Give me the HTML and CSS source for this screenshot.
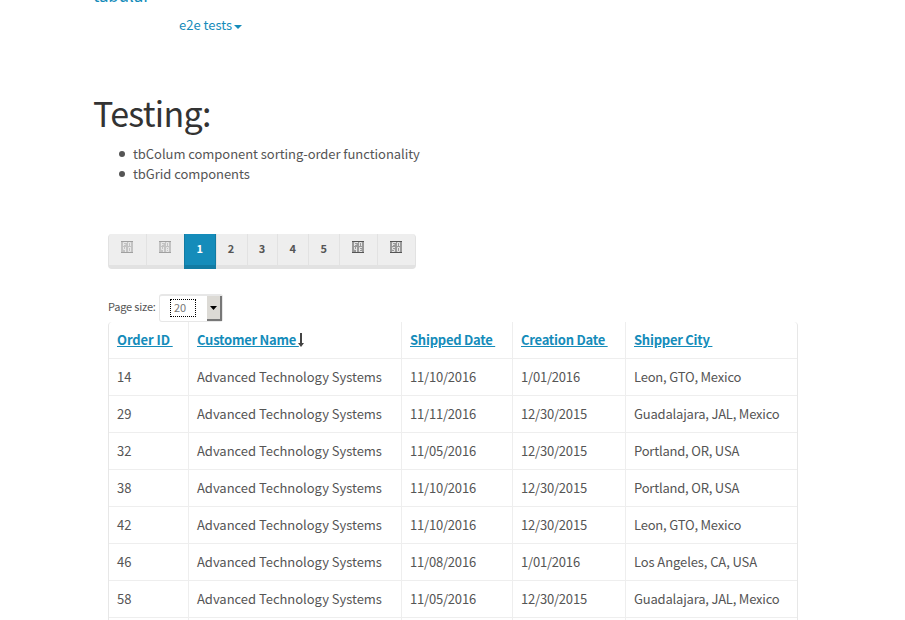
FILE: index.html
```
<!DOCTYPE html>
<html lang="en">
<head>
<meta charset="utf-8">
<title>tabular</title>
<link rel="stylesheet" href="styles.css">
</head>
<body>
<header class="navbar">
  <a class="brand">tabular</a>
  <nav class="menu"><a class="menu-link">e2e tests<svg class="caret" viewBox="0 0 8 4"><path d="M0 0h8L4 4z"/></svg></a></nav>
</header>
<main>
  <h1>Testing:</h1>
  <ul class="notes"><li>tbColum component sorting-order functionality</li><li>tbGrid components</li></ul>
  <ul class="pager">
    <li class="arrow off"><svg viewBox="0 0 12 12"><path class="tofu" d="M0 0h12v12H0z"/><path class="edge" d="M0 .5h12M0 11.500h12"/><path class="hex" d="M2.500 5V1.500H6M2.500 3.500h2M7.500 5V1.500h2V5M2.500 6v2.500H5M4.500 6v5M9 6.500H7.500v4h2V6"/></svg></li>
    <li class="arrow off"><svg viewBox="0 0 12 12"><path class="tofu" d="M0 0h12v12H0z"/><path class="edge" d="M0 .5h12M0 11.500h12"/><path class="hex" d="M2.500 5V1.500H6M2.500 3.500h2M7.500 5V1.500h2V5M2.500 6v2.500H5M4.500 6v5M7.500 6.500h2v4h-2zM7.500 8.500h2"/></svg></li>
    <li class="num active">1</li><li class="num">2</li><li class="num">3</li><li class="num">4</li><li class="num">5</li>
    <li class="arrow"><svg viewBox="0 0 12 12"><path class="tofu" d="M0 0h12v12H0z"/><path class="edge" d="M0 .5h12M0 11.500h12"/><path class="hex" d="M2.500 5V1.500H6M2.500 3.500h2M7.500 5V1.500h2V5M2.500 6v2.500H5M4.500 6v5M10 6.500H7.500v4H10M7.500 8.500h2"/></svg></li>
    <li class="arrow"><svg viewBox="0 0 12 12"><path class="tofu" d="M0 0h12v12H0z"/><path class="edge" d="M0 .5h12M0 11.500h12"/><path class="hex" d="M2.500 5V1.500H6M2.500 3.500h2M7.500 5V1.500h2V5M5 6.500H2.500v2h2v2H2M7.500 6.500h2v4h-2z"/></svg></li>
  </ul>
  <div class="page-size"><span class="size-label">Page size:</span><div class="select"><span class="value">20</span><span class="drop"><svg viewBox="0 0 7 4"><path d="M0 0h7L3.500 4z"/></svg></span></div></div>
  <table>
    <colgroup><col class="c1"><col class="c2"><col class="c3"><col class="c4"><col class="c5"></colgroup>
    <thead><tr><th><a>Order ID&nbsp;</a></th><th><a>Customer Name&nbsp;</a><svg class="sort" viewBox="0 0 6 14"><path d="M2 0h2v10h2L3 14 0 10h2z"/></svg></th><th><a>Shipped Date&nbsp;</a></th><th><a>Creation Date&nbsp;</a></th><th><a>Shipper City&nbsp;</a></th></tr></thead>
    <tbody>
      <tr><td>14</td><td class="name">Advanced Technology Systems</td><td>11/10/2016</td><td>1/01/2016</td><td>Leon, GTO, Mexico</td></tr>
      <tr><td>29</td><td class="name">Advanced Technology Systems</td><td>11/11/2016</td><td>12/30/2015</td><td>Guadalajara, JAL, Mexico</td></tr>
      <tr><td>32</td><td class="name">Advanced Technology Systems</td><td>11/05/2016</td><td>12/30/2015</td><td>Portland, OR, USA</td></tr>
      <tr><td>38</td><td class="name">Advanced Technology Systems</td><td>11/10/2016</td><td>12/30/2015</td><td>Portland, OR, USA</td></tr>
      <tr><td>42</td><td class="name">Advanced Technology Systems</td><td>11/10/2016</td><td>12/30/2015</td><td>Leon, GTO, Mexico</td></tr>
      <tr><td>46</td><td class="name">Advanced Technology Systems</td><td>11/08/2016</td><td>1/01/2016</td><td class="wide">Los Angeles, CA, USA</td></tr>
      <tr><td>58</td><td class="name">Advanced Technology Systems</td><td>11/05/2016</td><td>12/30/2015</td><td>Guadalajara, JAL, Mexico</td></tr>
      <tr class="tail"><td></td><td></td><td></td><td></td><td></td></tr>
    </tbody>
  </table>
</main>
</body>
</html>
```
FILE: styles.css
```
* { box-sizing: border-box; }
html { overflow: hidden; }
body { margin: 0; height: 620px; overflow: hidden; background: #fff; color: #555; font: 13px/20px "Noto Sans CJK JP", sans-serif; }
ul { list-style: none; margin: 0; padding: 0; }
svg { display: block; }
.navbar { height: 90px; padding-left: 93px; color: #158cba; display: flex; }
.brand { width: 86px; font-size: 17px; line-height: 20px; margin-top: -15px; letter-spacing: -.1px; }
.menu { padding-top: 15px; }
.menu-link { display: flex; align-items: center; }
.caret { width: 8px; height: 4px; margin: 4px 0 0 2px; fill: currentColor; }
main { padding-left: 93px; }
h1 { margin: 0; height: 54px; font-size: 34px; line-height: 45px; letter-spacing: -.7px; font-weight: 400; color: #333; }
.notes { height: 90px; padding-left: 26px; letter-spacing: -.05px; }
.notes li { display: flex; align-items: center; height: 20px; }
.notes li::before { content: ""; width: 6px; height: 6px; border-radius: 50%; background: #555; margin-right: 8px; }
.pager { display: flex; width: 308px; height: 35px; margin-left: 15px; background: #eee; border: 1px solid #e2e2e2; border-width: 0 1px 4px; border-radius: 4px; font-size: 11px; font-weight: 700; }
.pager li { height: 31px; border-left: 1px solid #e2e2e2; text-align: center; line-height: 29px; }
.pager li:first-child { border-left: 0; }
.arrow { width: 38px; padding: 7px 0 0 12px; }
.pager .arrow:first-child { width: 37px; }
.arrow svg { width: 12px; height: 12px; }
.arrow.off svg { opacity: .5; }
.tofu { fill: #999; }
.edge { fill: none; stroke: #555; }
.hex { fill: none; stroke: #e4e4e4; }
.num { width: 31px; padding-right: 1px; }
.pager .active { height: 35px; width: 32px; padding: 0; background: #158cba; color: #fff; border: solid #127ba3; border-width: 0 1px 4px; }
.page-size { display: flex; height: 28px; margin: 25px 0 0 15px; }
.size-label { width: 51px; font-size: 11px; line-height: 25px; letter-spacing: -.2px; white-space: nowrap; }
.select { display: flex; width: 64px; height: 28px; border: 1px solid #e7e7e7; border-top-width: 2px; border-radius: 3px; justify-content: space-between; }
.value { width: 26px; height: 18px; margin: 3px 0 0 10px; padding-left: 3px; border: 1px dotted #000; font-size: 11px; line-height: 15px; color: #777; }
.drop { width: 15px; height: 25px; background: #dcdad5; border: solid #777; border-width: 0 2px 2px 0; padding: 10px 0 0 3px; }
.drop svg { width: 7px; height: 4px; fill: #000; }
table { width: 690px; margin-left: 15px; table-layout: fixed; border-collapse: separate; border-spacing: 0; border: 1px solid #e7e7e7; border-width: 0 1px; border-radius: 4px 4px 0 0; }
.c1 { width: 79px; } .c2 { width: 213px; } .c3 { width: 111px; } .c4 { width: 113px; } .c5 { width: 172px; }
th, td { height: 37px; padding: 0 8px; border-bottom: 1px solid #eee; border-left: 1px solid #eee; text-align: left; white-space: nowrap; letter-spacing: -.2px; }
th { letter-spacing: -.25px; }
.name { letter-spacing: -.03px; }
.wide { letter-spacing: -.1px; }
th:first-child, td:first-child { border-left: 0; }
th:first-child { letter-spacing: -.1px; }
td:first-child { letter-spacing: 0; }
.tail td { height: 2px; border-bottom: 0; }
th a { color: #158cba; text-decoration: underline; }
.sort { display: inline-block; width: 6px; height: 14px; margin-left: -1px; fill: #444; vertical-align: -2px; }
```
